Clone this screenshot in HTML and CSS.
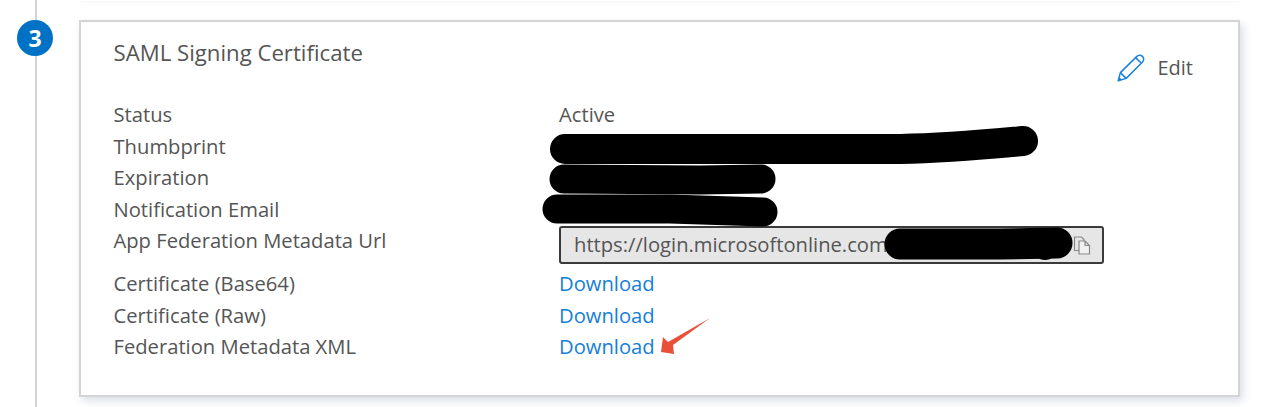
FILE: index.html
```html
<!DOCTYPE html>
<html lang="en">
<head>
<meta charset="utf-8">
<title>SAML Signing Certificate</title>
<link rel="stylesheet" href="styles.css">
</head>
<body>
<main class="page">
  <div class="prev-card"></div>
  <section class="step">
    <div class="rail"><span class="badge">3</span></div>
    <article class="card">
      <header class="card-head">
        <h2 class="title">SAML Signing Certificate</h2>
        <button class="edit" type="button">
          <svg class="edit-icon" viewBox="0 0 28 28" width="28" height="28" aria-hidden="true">
            <path d="M1.2 26.8 L3.4 18.6 L19.6 2.6 C21.4 0.8 23.8 0.8 25.4 2.4 C27.1 4.1 27.1 6.4 25.3 8.2 L9.2 24.4 Z" fill="none" stroke="#1b82dc" stroke-width="1.5" stroke-linejoin="round"/>
            <path d="M18.6 3.6 L24.3 9.2 M3.4 18.6 L9.2 24.4" fill="none" stroke="#1b82dc" stroke-width="1.5"/>
            <path d="M1.2 26.8 L2.2 23 L5 25.8 Z" fill="#1b82dc"/>
          </svg>
          <span>Edit</span>
        </button>
      </header>
      <dl class="props">
        <dt>Status</dt><dd>Active</dd>
        <dt>Thumbprint</dt><dd></dd>
        <dt>Expiration</dt><dd></dd>
        <dt>Notification Email</dt><dd></dd>
        <dt>App Federation Metadata Url</dt>
        <dd class="field-cell">
          <div class="copy-field">
            <span class="copy-text">https://login.microsoftonline.com</span>
            <svg class="copy-icon" viewBox="0 0 18 19" width="18" height="19" aria-hidden="true">
              <path d="M6 14.5 H1.5 V1 H8.5 L11 3.5 V5" fill="none" stroke="#888" stroke-width="1.2"/>
              <path d="M6 5 H12 L16.5 9.5 V18 H6 Z M12 5 V9.5 H16.5" fill="#f0f0f0" stroke="#888" stroke-width="1.2"/>
            </svg>
          </div>
        </dd>
        <dt>Certificate (Base64)</dt><dd><a href="#">Download</a></dd>
        <dt>Certificate (Raw)</dt><dd><a href="#">Download</a></dd>
        <dt>Federation Metadata XML</dt><dd><a href="#">Download</a></dd>
      </dl>
    </article>
  </section>
  <svg class="annotations" viewBox="0 0 1264 407" width="1264" height="407" aria-hidden="true">
    <g fill="none" stroke="#000" stroke-linecap="round">
      <path d="M565 149 L900 149 C950 148 990 144 1023 141" stroke-width="30"/>
      <path d="M564 179 L700 180 L761 179" stroke-width="29"/>
      <path d="M557 209 L670 209 L763 212" stroke-width="29"/>
      <path d="M900 244 L1000 244 L1057 243" stroke-width="31"/>
    </g>
    <circle cx="1045" cy="248" r="12" fill="#000"/>
    <path d="M710 318 L673 345 L674 354 L661 352 L663 337 L668 342 Z" fill="#e8503a"/>
  </svg>
</main>
</body>
</html>
```
FILE: styles.css
```css
* { box-sizing: border-box; }
html, body { margin: 0; background: #fff; }
body { font-family: "Open Sans", "Noto Sans", sans-serif; color: #555; }
.page { position: relative; width: 1264px; height: 407px; overflow: hidden; padding-top: 20px; }
.prev-card { position: absolute; left: 80px; top: -10px; width: 1160px; height: 11px; background: #fff; box-shadow: 0 1px 3px rgba(120,125,140,.08); }
.step { display: flex; align-items: flex-start; padding-left: 17px; }
.step::before { content: ""; position: absolute; left: 35px; top: 0; bottom: 0; width: 2px; background: #d2d2d2; }
.rail { position: relative; width: 62px; flex: none; }
.badge { display: flex; align-items: center; justify-content: center; width: 36px; height: 36px; border-radius: 50%; background: #0072c6; color: #fff; font-size: 23px; font-weight: 700; line-height: 1; }
.card { width: 1161px; height: 377px; border: 2px solid #d4d4d4; background: #fff; box-shadow: 3px 4px 8px rgba(130,140,165,.28); padding: 16px 0 0 32.5px; }
.card-head { display: flex; justify-content: space-between; align-items: flex-start; height: 61px; padding-right: 45px; }
.title { margin: 0; font-size: 22.2px; line-height: 30px; font-weight: 400; color: #555; }
.edit { display: flex; align-items: center; gap: 12px; margin-top: 15px; padding: 0; border: 0; background: none; font: inherit; font-size: 20px; line-height: 30px; color: #555; }
.edit-icon { display: block; }
.props { display: grid; grid-template-columns: 445.5px 545px; grid-template-rows: repeat(4, 31.5px) 43px repeat(3, 31.5px); margin: 0; font-size: 20.2px; line-height: 31.5px; }
.props dt, .props dd { margin: 0; white-space: nowrap; }
.props a { color: #1480d8; text-decoration: none; }
.copy-field { display: flex; align-items: center; justify-content: space-between; width: 545px; height: 38px; margin-top: 1px; padding: 0 11px 2px 13px; border: 2px solid #3a3a3a; border-radius: 3px; background: #e6e6e6; }
.copy-text { font-size: 20.2px; line-height: 30px; color: #555; }
.copy-icon { display: block; margin-top: 2px; }
.annotations { position: absolute; left: 0; top: 0; pointer-events: none; }
```
